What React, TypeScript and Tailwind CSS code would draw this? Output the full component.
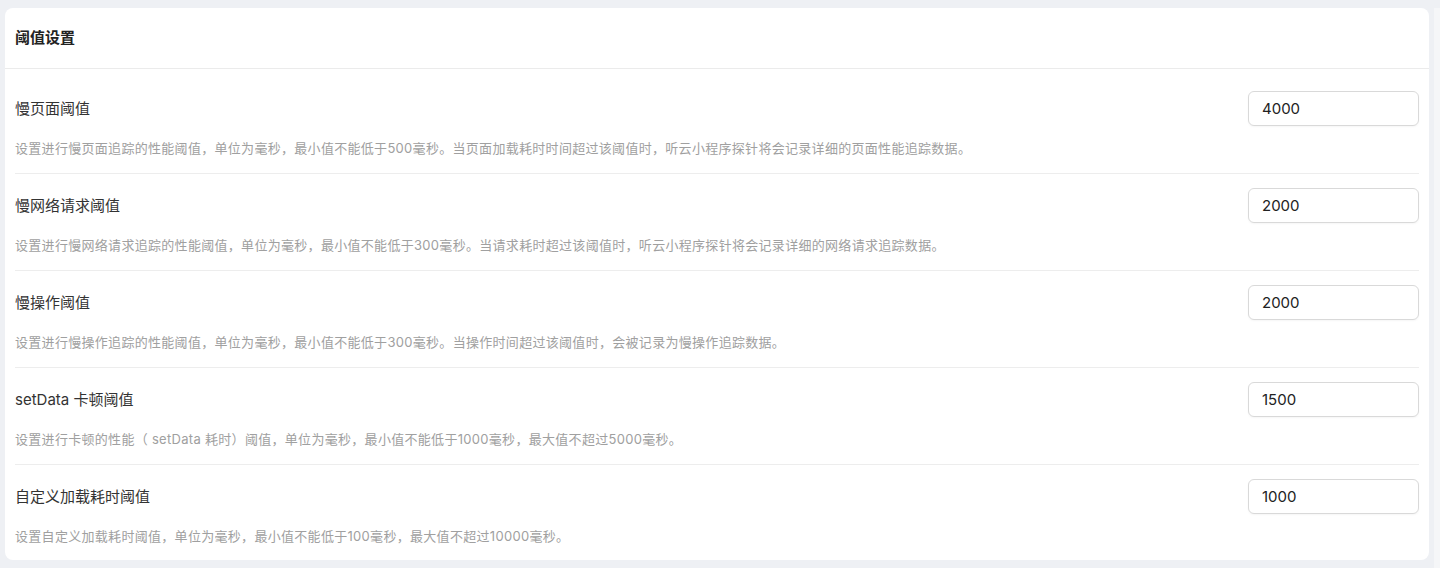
import React from "react";

type Threshold = {
  label: string;
  value: string;
  desc: string;
};

const items: Threshold[] = [
  {
    label: "慢页面阈值",
    value: "4000",
    desc: "设置进行慢页面追踪的性能阈值，单位为毫秒，最小值不能低于500毫秒。当页面加载耗时时间超过该阈值时，听云小程序探针将会记录详细的页面性能追踪数据。",
  },
  {
    label: "慢网络请求阈值",
    value: "2000",
    desc: "设置进行慢网络请求追踪的性能阈值，单位为毫秒，最小值不能低于300毫秒。当请求耗时超过该阈值时，听云小程序探针将会记录详细的网络请求追踪数据。",
  },
  {
    label: "慢操作阈值",
    value: "2000",
    desc: "设置进行慢操作追踪的性能阈值，单位为毫秒，最小值不能低于300毫秒。当操作时间超过该阈值时，会被记录为慢操作追踪数据。",
  },
  {
    label: "setData 卡顿阈值",
    value: "1500",
    desc: "设置进行卡顿的性能（ setData 耗时）阈值，单位为毫秒，最小值不能低于1000毫秒，最大值不超过5000毫秒。",
  },
  {
    label: "自定义加载耗时阈值",
    value: "1000",
    desc: "设置自定义加载耗时阈值，单位为毫秒，最小值不能低于100毫秒，最大值不超过10000毫秒。",
  },
];

function ThresholdRow({ item, last }: { item: Threshold; last: boolean }) {
  return (
    <div className={`pt-[14px] pb-[15px] ${last ? "" : "border-b border-[#ededed]"}`}>
      <div className="flex items-center justify-between">
        <span className="text-[15px] leading-[20px] text-[#333]">{item.label}</span>
        <input
          defaultValue={item.value}
          className="h-[35px] w-[171px] rounded-[6px] border border-[#d9d9d9] bg-white px-[13px] text-[15px] text-[#222] shadow-[0_1px_2px_rgba(0,0,0,0.04)] outline-none"
        />
      </div>
      <p className="mt-[12px] text-[13px] leading-[20px] tracking-[0.3px] text-[#a0a0a0]">{item.desc}</p>
    </div>
  );
}

export default function App() {
  return (
    <div
      className="flex h-[568px] w-[1440px] bg-[#eef0f4] pt-2 pl-[5px]"
      style={{ fontFamily: 'Inter, "Noto Sans CJK SC", sans-serif' }}
    >
      <div className="h-[552px] w-[1424px] overflow-hidden rounded-[8px] bg-white">
        <div className="flex h-[61px] items-center border-b border-[#ebebeb] px-[10px]">
          <h2 className="text-[15px] font-semibold text-[#222]">阈值设置</h2>
        </div>
        <div className="px-[10px] pt-[8px]">
          {items.map((item, i) => (
            <ThresholdRow key={item.label} item={item} last={i === items.length - 1} />
          ))}
        </div>
      </div>
      <div className="ml-auto w-[6px] bg-[#f5f6f8]" />
    </div>
  );
}
